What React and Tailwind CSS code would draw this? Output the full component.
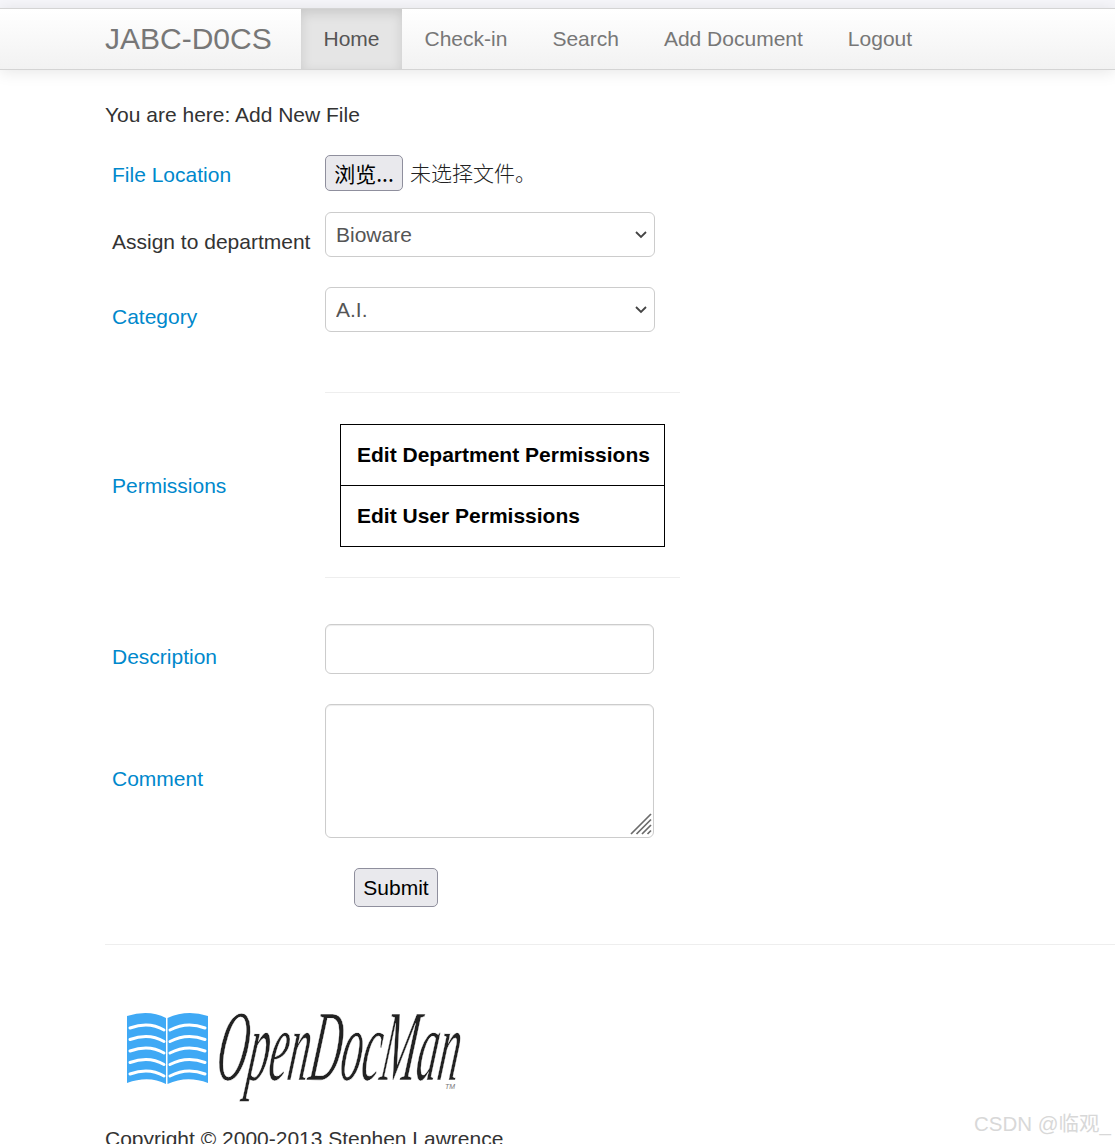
import React from "react";

function Label({ children, dark, className = "" }) {
  return (
    <div className={`w-[220px] shrink-0 pl-[7px] ${dark ? "text-[#333333]" : "text-[#0088cc]"} ${className}`}>
      {children}
    </div>
  );
}

function Chevron() {
  return (
    <svg className="pointer-events-none absolute right-[8px] top-[19px]" width="12" height="8" viewBox="0 0 12 8" fill="none" stroke="#444444" strokeWidth="1.8">
      <path d="M1 1 L6 6 L11 1" />
    </svg>
  );
}

function Select({ value }) {
  return (
    <div className="relative h-[45px] w-[330px]">
      <select className="h-full w-full appearance-none rounded-[6px] border border-[#cccccc] bg-white pl-[10px] text-[21px] text-[#555555]">
        <option>{value}</option>
      </select>
      <Chevron />
    </div>
  );
}

function Logo() {
  const stripes = [0, 1, 2, 3, 4];
  return (
    <svg width="345" height="125" viewBox="0 -25 345 125" className="block -mt-[25px]">
      <g fill="#3fa9f5">
        <path d="M0 4 Q22 -3 39 6 V72 Q22 63 0 71 Z" />
        <path d="M40.5 6 Q60 -3 81 4 V71 Q60 63 40.5 72 Z" />
      </g>
      <g fill="none" stroke="#ffffff" strokeWidth="3" strokeLinecap="round">
        {stripes.map((i) => (
          <g key={i}>
            <path d={`M3 ${16 + i * 11.5} Q22 ${9 + i * 11.5} 37 ${18 + i * 11.5}`} />
            <path d={`M43 ${18 + i * 11.5} Q60 ${9 + i * 11.5} 78 ${16 + i * 11.5}`} />
          </g>
        ))}
      </g>
      <text
        x="0"
        y="0"
        transform="translate(87 68) skewX(-8)"
        fontFamily="'Liberation Serif', serif"
        fontStyle="italic"
        fontSize="101"
        fill="#222222"
        stroke="#ffffff"
        strokeWidth="0.7"
        paintOrder="fill"
        textLength="243"
        lengthAdjust="spacingAndGlyphs"
      >
        OpenDocMan
      </text>
      <text x="318" y="77" fontFamily="'Liberation Sans', sans-serif" fontStyle="italic" fontSize="7" fill="#777777">TM</text>
    </svg>
  );
}

export default function App() {
  return (
    <div className="relative h-[1144px] overflow-hidden bg-white text-[21px] leading-[30px] text-[#333333] font-['Liberation_Sans',Arial,sans-serif]">
      <div className="h-2 bg-[#f6f6fa]" />
      <nav className="h-[62px] border-y border-[#d4d4d4] bg-linear-to-b from-white to-[#f2f2f2] pl-[105px] flex items-stretch shadow-[0_2px_15px_rgba(0,0,0,0.1)]">
        <a className="w-[196px] shrink-0 text-[30px] leading-[60px] text-[#777777]">JABC-D0CS</a>
        <a className="w-[101px] text-center leading-[60px] text-[#555555] bg-[#e5e5e5] shadow-[inset_0_4px_12px_rgba(0,0,0,0.125)]">Home</a>
        <a className="px-[22.5px] leading-[60px] text-[#777777]">Check-in</a>
        <a className="px-[22.5px] leading-[60px] text-[#777777]">Search</a>
        <a className="px-[22.5px] leading-[60px] text-[#777777]">Add Document</a>
        <a className="px-[22.5px] leading-[60px] text-[#777777]">Logout</a>
      </nav>

      <main className="pl-[105px] pt-[30px]">
        <p>You are here: Add New File</p>

        <div className="flex items-center mt-[25px] h-9">
          <Label className="pt-[4px]">File Location</Label>
          <button className="h-9 w-[78px] rounded-[5px] border border-[#8f8f9d] bg-[#e9e9ed] text-[#000000] text-[21px] whitespace-nowrap font-['Noto_Sans_CJK_SC','Liberation_Sans',sans-serif]">浏览...</button>
          <span className="ml-[7px] pb-[3px] text-[21px] font-light text-[#222222] font-['Noto_Sans_CJK_SC',sans-serif]">未选择文件。</span>
        </div>

        <div className="flex items-start mt-[21px]">
          <Label dark className="pt-[15px]">Assign to department</Label>
          <Select value="Bioware" />
        </div>

        <div className="flex items-start mt-[30px]">
          <Label className="pt-[15px]">Category</Label>
          <Select value="A.I." />
        </div>

        <div className="flex items-center mt-[60px]">
          <Label className="pt-[2px]">Permissions</Label>
          <div className="w-[355px] border-y border-[#eeeeee] pt-[31px] pb-[30px] pl-[15px]">
            <div className="w-[325px] border border-black text-black font-bold">
              <div className="h-[61px] pl-4 leading-[60px] border-b border-black whitespace-nowrap">Edit Department Permissions</div>
              <div className="h-[60px] pl-4 leading-[60px]">Edit User Permissions</div>
            </div>
          </div>
        </div>

        <div className="flex items-start mt-[46px]">
          <Label className="pt-[18px]">Description</Label>
          <input className="h-[50px] w-[329px] rounded-[6px] border border-[#cccccc] bg-white shadow-[inset_0_1px_1px_rgba(0,0,0,0.075)]" />
        </div>

        <div className="flex items-center mt-[30px]">
          <Label className="pt-[16px]">Comment</Label>
          <div className="relative h-[134px] w-[329px]">
            <textarea className="block h-full w-full resize-none rounded-[6px] border border-[#cccccc] bg-white shadow-[inset_0_1px_1px_rgba(0,0,0,0.075)]" />
            <svg className="absolute bottom-[3px] right-[2px]" width="22" height="22" viewBox="0 0 22 22" fill="none" stroke="#6b6b6b" strokeWidth="1.7">
              <path d="M1 21 L21 1" />
              <path d="M6.5 21 L21 6.5" />
              <path d="M12 21 L21 12" />
              <path d="M17.5 21 L21 17.5" />
            </svg>
          </div>
        </div>

        <div className="mt-[30px] pl-[249px]">
          <button className="block h-[39px] w-[84px] rounded-[5px] border border-[#8f8f9d] bg-[#e9e9ed] text-[21px] text-black">Submit</button>
        </div>

        <hr className="mt-[37px] border-0 border-t border-[#eeeeee]" />

        <div className="mt-[67px] pl-[22px]">
          <Logo />
        </div>

        <p className="mt-[12px] whitespace-nowrap">Copyright © 2000-2013 Stephen Lawrence</p>
      </main>

      <div className="absolute right-[4px] top-[1109px] text-[20.5px] text-[#d8d8d8] whitespace-nowrap font-['Liberation_Sans','Noto_Sans_CJK_SC',sans-serif]">CSDN @临观_</div>
    </div>
  );
}
